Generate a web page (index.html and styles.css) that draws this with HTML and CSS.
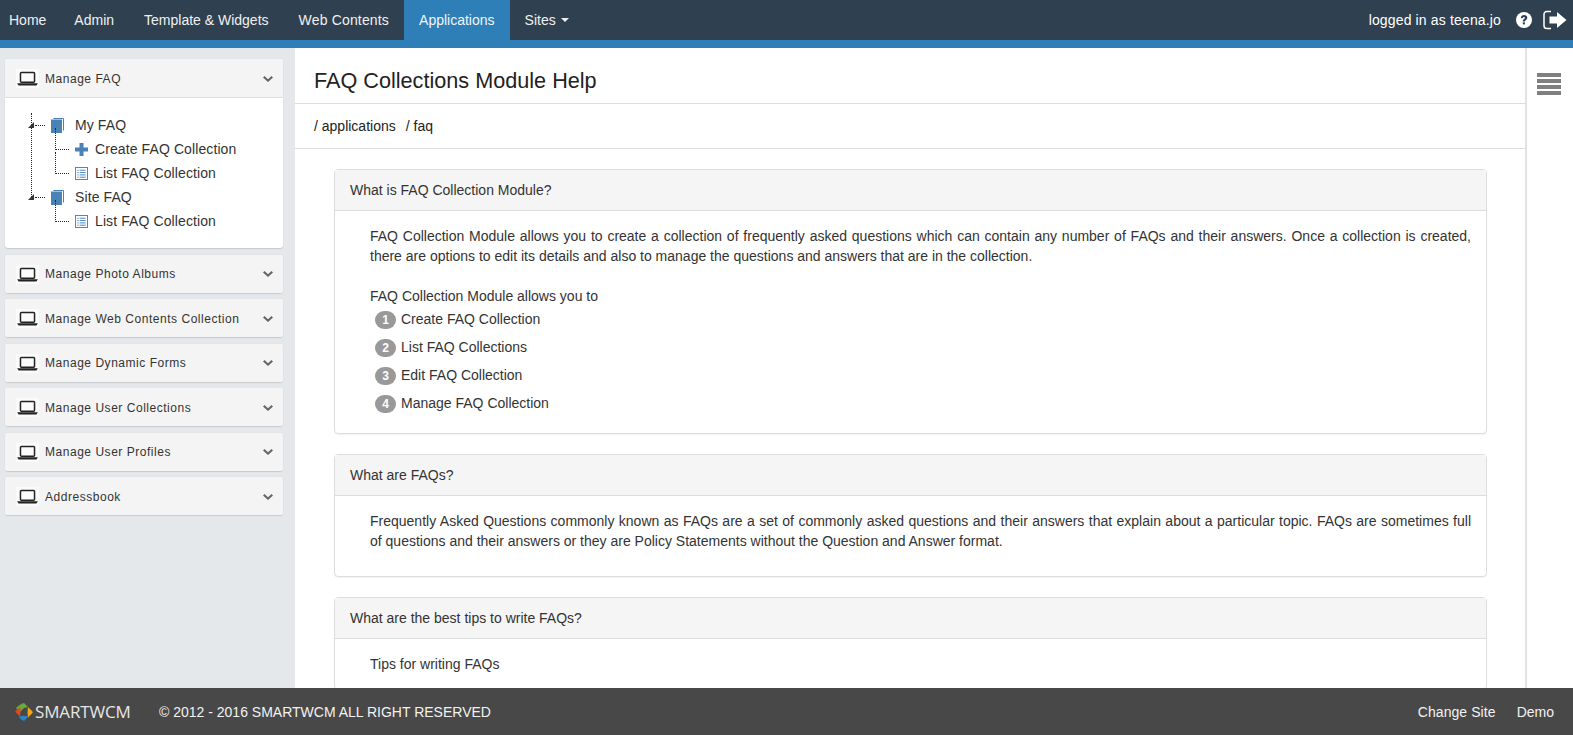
FILE: index.html
```html
<!DOCTYPE html>
<html lang="en">
<head>
<meta charset="utf-8">
<title>FAQ Collections Module Help</title>
<link rel="stylesheet" href="styles.css">
</head>
<body>
<header class="topbar">
  <nav class="nav">
    <a class="nav-item home">Home</a>
    <a class="nav-item">Admin</a>
    <a class="nav-item">Template &amp; Widgets</a>
    <a class="nav-item wide">Web Contents</a>
    <a class="nav-item active">Applications</a>
    <a class="nav-item">Sites <span class="caret"></span></a>
  </nav>
  <div class="user">
    <span class="who">logged in as teena.jo</span>
    <svg class="help" viewBox="0 0 16 16"><circle cx="8" cy="8" r="8" fill="#fff"/><path d="M4.800 6.200C4.900 4.200 6.300 3 8.100 3c1.800 0 3.200 1.100 3.200 2.700 0 1.300-.8 2-1.600 2.500-.6.400-.8.600-.8 1.200H6.800c0-1.300.4-1.900 1.200-2.400.6-.4.900-.7.900-1.100 0-.5-.4-.8-.9-.8-.6 0-1 .4-1 1z" fill="#2f4050"/><rect x="6.800" y="10.300" width="2.100" height="2.100" fill="#2f4050"/></svg>
    <svg class="logout" viewBox="0 0 24 20"><path d="M8 1.500H3.800C2.200 1.500 1 2.700 1 4.300v11.400c0 1.600 1.200 2.800 2.800 2.800H8" fill="none" stroke="#fff" stroke-width="1.500"/><path d="M14 2 23.500 10 14 18v-4.500H6.500v-7H14z" fill="#fff"/></svg>
  </div>
</header>
<div class="band"></div>
<div class="layout">
  <aside class="sidebar">
    <section class="acc open">
      <div class="acc-head"><span class="lap-box"><svg class="laptop" viewBox="0 0 22 16"><use href="#lap"/></svg></span><span class="acc-title">Manage FAQ</span><svg class="chev" viewBox="0 0 10 6"><use href="#chev"/></svg></div>
      <div class="acc-body">
        <div class="tree">
          <span class="tree-spine"></span>
          <div class="node root">
            <span class="arrow"></span><span class="dash"></span>
            <svg class="ico book" viewBox="0 0 13 15"><use href="#book"/></svg>
            <span>My FAQ</span>
          </div>
          <div class="branch">
            <div class="node leaf"><span class="elbow"></span>
              <svg class="ico" viewBox="0 0 13 13"><path d="M4.500 0h4v4.500H13v4H8.500V13h-4V8.500H0v-4h4.500z" fill="#4b82b5"/></svg>
              <span>Create FAQ Collection</span></div>
            <div class="node leaf"><span class="elbow"></span>
              <svg class="ico" viewBox="0 0 14 14"><use href="#list"/></svg>
              <span>List FAQ Collection</span></div>
          </div>
          <div class="node root">
            <span class="arrow"></span><span class="dash"></span>
            <svg class="ico book" viewBox="0 0 13 15"><use href="#book"/></svg>
            <span>Site FAQ</span>
          </div>
          <div class="branch">
            <div class="node leaf"><span class="elbow"></span>
              <svg class="ico" viewBox="0 0 14 14"><use href="#list"/></svg>
              <span>List FAQ Collection</span></div>
          </div>
        </div>
      </div>
    </section>
    <section class="acc"><div class="acc-head"><span class="lap-box"><svg class="laptop" viewBox="0 0 22 16"><use href="#lap"/></svg></span><span class="acc-title">Manage Photo Albums</span><svg class="chev" viewBox="0 0 10 6"><use href="#chev"/></svg></div></section>
    <section class="acc"><div class="acc-head"><span class="lap-box"><svg class="laptop" viewBox="0 0 22 16"><use href="#lap"/></svg></span><span class="acc-title">Manage Web Contents Collection</span><svg class="chev" viewBox="0 0 10 6"><use href="#chev"/></svg></div></section>
    <section class="acc"><div class="acc-head"><span class="lap-box"><svg class="laptop" viewBox="0 0 22 16"><use href="#lap"/></svg></span><span class="acc-title">Manage Dynamic Forms</span><svg class="chev" viewBox="0 0 10 6"><use href="#chev"/></svg></div></section>
    <section class="acc"><div class="acc-head"><span class="lap-box"><svg class="laptop" viewBox="0 0 22 16"><use href="#lap"/></svg></span><span class="acc-title">Manage User Collections</span><svg class="chev" viewBox="0 0 10 6"><use href="#chev"/></svg></div></section>
    <section class="acc"><div class="acc-head"><span class="lap-box"><svg class="laptop" viewBox="0 0 22 16"><use href="#lap"/></svg></span><span class="acc-title">Manage User Profiles</span><svg class="chev" viewBox="0 0 10 6"><use href="#chev"/></svg></div></section>
    <section class="acc"><div class="acc-head"><span class="lap-box"><svg class="laptop" viewBox="0 0 22 16"><use href="#lap"/></svg></span><span class="acc-title">Addressbook</span><svg class="chev" viewBox="0 0 10 6"><use href="#chev"/></svg></div></section>
  </aside>
  <main class="main">
    <h1 class="page-title">FAQ Collections Module Help</h1>
    <div class="crumbs"><span>/ applications</span><span>/ faq</span></div>
    <div class="scroll">
      <article class="card">
        <div class="card-head">What is FAQ Collection Module?</div>
        <div class="card-body">
          <p class="just">FAQ Collection Module allows you to create a collection of frequently asked questions which can contain any number of FAQs and their answers. Once a collection is created, there are options to edit its details and also to manage the questions and answers that are in the collection.</p>
          <p class="lead">FAQ Collection Module allows you to</p>
          <ol class="steps">
            <li><span class="num">1</span>Create FAQ Collection</li>
            <li><span class="num">2</span>List FAQ Collections</li>
            <li><span class="num">3</span>Edit FAQ Collection</li>
            <li><span class="num">4</span>Manage FAQ Collection</li>
          </ol>
        </div>
      </article>
      <article class="card">
        <div class="card-head">What are FAQs?</div>
        <div class="card-body short">
          <p class="just">Frequently Asked Questions commonly known as FAQs are a set of commonly asked questions and their answers that explain about a particular topic. FAQs are sometimes full of questions and their answers or they are Policy Statements without the Question and Answer format.</p>
        </div>
      </article>
      <article class="card">
        <div class="card-head">What are the best tips to write FAQs?</div>
        <div class="card-body"><p>Tips for writing FAQs</p></div>
      </article>
    </div>
  </main>
  <aside class="rail">
    <div class="bars"><i></i><i></i><i></i><i></i></div>
  </aside>
</div>
<footer class="footer">
  <div class="foot-left">
    <span class="brand">
      <svg class="logo" viewBox="0 0 18 18">
        <path d="M9 0 13 4 9 5 5 9 1 5C3 3 6 .5 9 0z" fill="#6aaa3c"/>
        <path d="M13 4 17 8C18 9 18 9.500 17 10.500L13 14.500 12.500 9.500z" fill="#f2a71b"/>
        <path d="M13.500 13.500 9 18C6 17 4 14.500 4 13.500L8.500 12.800z" fill="#2a86c8"/>
        <path d="M5.500 4 5.500 8.500 5 13.500 1 9.500C0 9 0 8.500 1 7.500z" fill="#dc4a26"/>
      </svg>
      <span class="brand-name">SMARTWCM</span>
    </span>
    <span class="copy">© 2012 - 2016 SMARTWCM ALL RIGHT RESERVED</span>
  </div>
  <div class="foot-right"><a>Change Site</a><a>Demo</a></div>
</footer>
<svg class="defs" width="0" height="0"><defs>
  <g id="lap"><rect x="3.500" y="1.500" width="15" height="10.500" rx="1" fill="none" stroke="#222" stroke-width="1.600"/><path d="M0 13h22l-1.500 2.500h-19z" fill="#222"/></g>
  <path id="chev" d="M0 1.500 1.500 0 5 3.200 8.500 0 10 1.500 5 6z" fill="#666"/>
  <g id="book"><path d="M2.500 .5h10v12" fill="none" stroke="#4b82b5"/><rect y="1.500" width="11" height="13.500" fill="#4b82b5"/></g>
  <g id="list"><rect x=".5" y=".5" width="13" height="13" fill="#fff" stroke="#3f82bd"/><path d="M2.500 3.500h1.500M5 3.500h6.500M2.500 6h1.500M5 6h6.500M2.500 8.500h1.500M5 8.500h6.500M2.500 11h1.500M5 11h6.500" stroke="#3f82bd"/></g>
</defs></svg>
</body>
</html>
```
FILE: styles.css
```css
* { box-sizing: border-box; }
html, body { margin: 0; height: 100%; }
body {
  display: flex;
  flex-direction: column;
  height: 735px;
  overflow: hidden;
  font-family: "Liberation Sans", Arial, sans-serif;
  font-size: 14px;
  line-height: 20px;
  color: #333;
  background: #fff;
}
.defs { position: absolute; }
.topbar {
  flex: 0 0 40px;
  display: flex;
  justify-content: space-between;
  background: #2f4050;
  color: #fff;
}
.nav { display: flex; }
.nav-item {
  display: flex;
  align-items: center;
  gap: 5px;
  padding: 0 15px;
  height: 40px;
  color: #f0f0f0;
}
.nav-item.home { padding: 0 13px 0 9px; }
.nav-item.wide { letter-spacing: .17px; }
.nav-item.active { background: #2e7eb8; color: #f0f5f8; }
.caret {
  width: 0;
  height: 0;
  border-left: 4px solid transparent;
  border-right: 4px solid transparent;
  border-top: 4px solid #f0f0f0;
}
.user { display: flex; align-items: center; padding-right: 6px; }
.who { letter-spacing: .15px; }
.help { width: 16px; height: 16px; margin-left: 15px; }
.logout { width: 24px; height: 20px; margin-left: 11px; }
.band { flex: 0 0 8px; background: #2e7eb8; }
.layout { flex: 1; display: flex; min-height: 0; }
.sidebar {
  flex: 0 0 295px;
  background: #e4e8eb;
  padding: 11px 12px 0 5px;
}
.acc {
  background: #fff;
  border-radius: 3px;
  margin-bottom: 6.500px;
  box-shadow: 0 1px 1px rgba(0,0,0,.12), 0 0 1px rgba(0,0,0,.1);
}
.acc-head {
  display: flex;
  align-items: center;
  height: 38px;
  padding: 1.600px 10px 0 11px;
  background: #f4f4f4;
  border-radius: 3px;
  font-size: 12px;
  letter-spacing: .53px;
  color: #333;
}
.acc.open .acc-head { height: 39px; border-bottom: 1px solid #ddd; border-radius: 3px 3px 0 0; }
.lap-box {
  display: flex;
  align-items: center;
  justify-content: center;
  flex: none;
  width: 23px;
  height: 19px;
  margin-right: 6px;
  background: #fbfbfb;
}
.laptop { width: 21px; height: 15px; }
.acc-title { flex: 1; }
.chev { width: 10px; height: 6px; flex: none; }
.acc-body { padding: 15px 0 0 23px; height: 150px; letter-spacing: .1px; }
.tree { position: relative; }
.tree-spine {
  position: absolute;
  left: 3px;
  top: 0;
  height: 84px;
  border-left: 1px dotted #222;
}
.node { display: flex; align-items: center; height: 24px; }
.root { position: relative; }
.arrow {
  position: absolute;
  left: 0;
  top: 9px;
  width: 0;
  height: 0;
  border-bottom: 6px solid #333;
  border-left: 6px solid transparent;
}
.dash { width: 10px; margin-left: 7px; border-top: 1px dotted #222; }
.ico { width: 13px; height: 13px; margin-right: 7px; flex: none; }
.book { height: 15px; margin: 0 11px 0 6px; }
.branch { padding-left: 27px; }
.leaf { position: relative; padding-left: 20px; }
.elbow {
  position: absolute;
  left: 0;
  top: -9px;
  width: 14px;
  height: 22px;
  border-left: 1px dotted #222;
  border-bottom: 1px dotted #222;
}
.main { flex: 1; min-width: 0; display: flex; flex-direction: column; }
.page-title {
  flex: 0 0 56px;
  margin: 0;
  padding: 11px 19px 0;
  display: flex;
  align-items: center;
  font-size: 21.650px;
  font-weight: 400;
  color: #222;
  border-bottom: 1px solid #ddd;
}
.crumbs {
  flex: 0 0 45px;
  display: flex;
  align-items: center;
  gap: 10px;
  padding: 0 19px;
  border-bottom: 1px solid #ddd;
  color: #222;
}
.scroll { flex: 1; overflow: hidden; padding: 20px 38px 0 39px; }
.card {
  border: 1px solid #ddd;
  border-radius: 4px;
  margin-bottom: 20px;
  box-shadow: 0 1px 1px rgba(0,0,0,.05);
}
.card-head {
  height: 41px;
  padding: 0 15px;
  display: flex;
  align-items: center;
  background: #f5f5f5;
  border-bottom: 1px solid #ddd;
}
.card-body { padding: 15px 15px 15px 35px; }
.card-body p { margin: 0; }
.just { text-align: justify; }
.card-body .lead { margin-top: 20px; }
.steps { list-style: none; margin: 0; padding: 0 0 0 5px; }
.steps li { display: flex; align-items: center; height: 28px; padding-bottom: 2px; }
.num {
  width: 21px;
  height: 18px;
  margin: 2px 5px 0 0;
  border-radius: 9px;
  background: #999;
  color: #fff;
  font-size: 12px;
  font-weight: 700;
  line-height: 18px;
  text-align: center;
}
.short { padding-bottom: 25px; }
.rail { flex: 0 0 48px; border-left: 2px solid #e2e2e2; padding: 25px 0 0 10px; }
.bars { display: flex; flex-direction: column; gap: 2px; width: 24px; }
.bars i { display: block; height: 4px; background: #808080; }
.footer {
  flex: 0 0 47px;
  display: flex;
  align-items: center;
  justify-content: space-between;
  background: #484848;
  color: #f2f2f2;
  padding: 0 19px 0 15px;
}
.foot-left { display: flex; align-items: center; }
.brand { display: flex; align-items: center; width: 144px; }
.logo { width: 18px; height: 18px; margin-right: 2px; }
.brand-name { font-family: "Open Sans", sans-serif; font-size: 17px; color: #e6e6e6; letter-spacing: -.15px; }
.foot-right { display: flex; gap: 21px; }
.foot-right a:first-child { letter-spacing: .08px; }
```
